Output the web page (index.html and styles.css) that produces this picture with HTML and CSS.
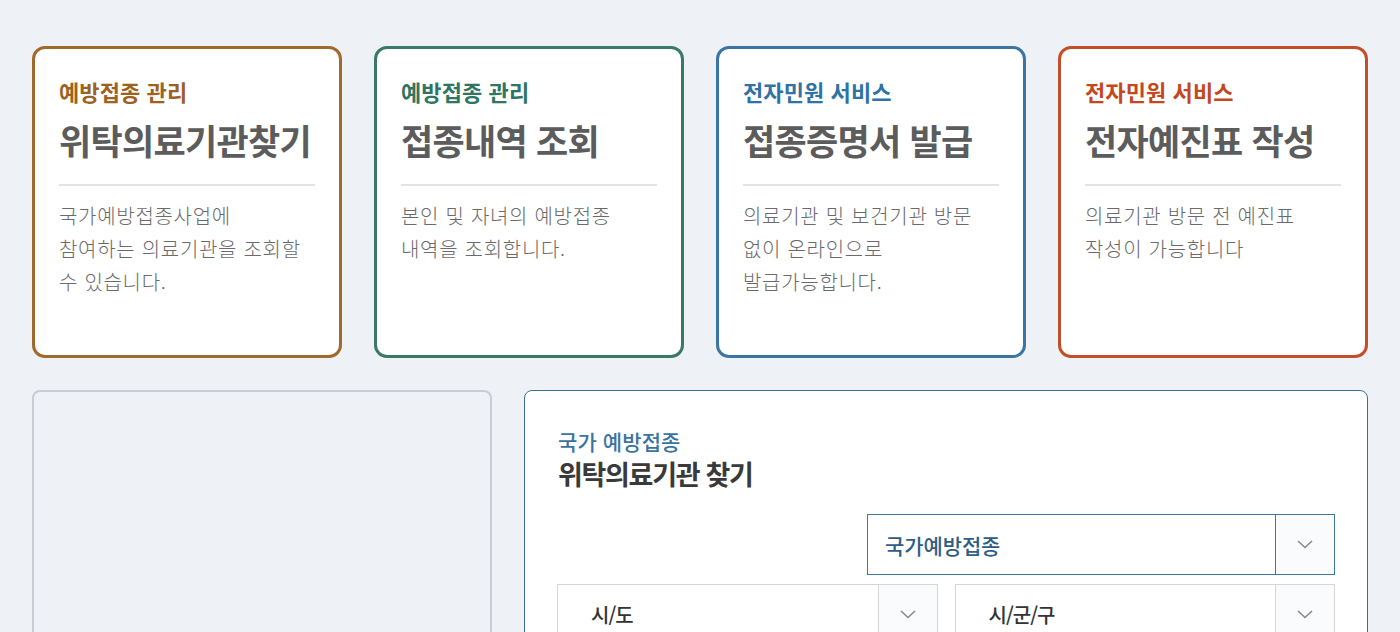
FILE: index.html
```html
<!DOCTYPE html>
<html lang="ko">
<head>
<meta charset="utf-8">
<title>예방접종</title>
<link rel="stylesheet" href="styles.css">
</head>
<body>
<div class="page">
  <div class="cards">
    <a class="card card-brown" href="#">
      <p class="eyebrow">예방접종 관리</p>
      <h2 class="title">위탁의료기관찾기</h2>
      <p class="desc">국가예방접종사업에<br>참여하는 의료기관을 조회할<br>수 있습니다.</p>
    </a>
    <a class="card card-green" href="#">
      <p class="eyebrow">예방접종 관리</p>
      <h2 class="title">접종내역 조회</h2>
      <p class="desc">본인 및 자녀의 예방접종<br>내역을 조회합니다.</p>
    </a>
    <a class="card card-blue" href="#">
      <p class="eyebrow">전자민원 서비스</p>
      <h2 class="title">접종증명서 발급</h2>
      <p class="desc">의료기관 및 보건기관 방문<br>없이 온라인으로<br>발급가능합니다.</p>
    </a>
    <a class="card card-red" href="#">
      <p class="eyebrow">전자민원 서비스</p>
      <h2 class="title">전자예진표 작성</h2>
      <p class="desc">의료기관 방문 전 예진표<br>작성이 가능합니다</p>
    </a>
  </div>
  <div class="bottom">
    <div class="panel-left"></div>
    <div class="panel-right">
      <p class="p-eyebrow">국가 예방접종</p>
      <h3 class="p-title">위탁의료기관 찾기</h3>
      <div class="row row-top">
        <div class="select select-main">
          <span class="select-text">국가예방접종</span>
          <span class="select-arrow"><svg width="16" height="9" viewBox="0 0 16 9"><path d="M1 1l7 6.5L15 1" fill="none" stroke="#8a8a8a" stroke-width="1.6"/></svg></span>
        </div>
      </div>
      <div class="row row-two">
        <div class="select select-sub">
          <span class="select-text sub-text">시/도</span>
          <span class="select-arrow"><svg width="16" height="9" viewBox="0 0 16 9"><path d="M1 1l7 6.5L15 1" fill="none" stroke="#8a8a8a" stroke-width="1.6"/></svg></span>
        </div>
        <div class="select select-sub">
          <span class="select-text sub-text">시/군/구</span>
          <span class="select-arrow"><svg width="16" height="9" viewBox="0 0 16 9"><path d="M1 1l7 6.5L15 1" fill="none" stroke="#8a8a8a" stroke-width="1.6"/></svg></span>
        </div>
      </div>
    </div>
  </div>
</div>
</body>
</html>
```

FILE: styles.css
```css
* { box-sizing: border-box; }
html, body { margin: 0; padding: 0; }
body {
  background: #eef2f6;
  font-family: "Noto Sans CJK KR", "Noto Sans", sans-serif;
  overflow: hidden;
  height: 632px;
}
.page {
  padding: 46px 32px 0;
}
.cards {
  display: flex;
  gap: 32px;
}
.card {
  display: block;
  width: 310px;
  height: 312px;
  background: #fff;
  border: 3px solid;
  border-radius: 13px;
  padding: 27px 24px 0 24px;
  text-decoration: none;
}
.card-brown { border-color: #a06a2c; }
.card-brown .eyebrow { color: #9b6222; }
.card-green { border-color: #3b7866; }
.card-green .eyebrow { color: #2f7561; }
.card-blue { border-color: #3b75a6; }
.card-blue .eyebrow { color: #2f72a6; }
.card-red { border-color: #c24e2a; }
.card-red .eyebrow { color: #c4471d; }

.eyebrow {
  margin: 0;
  font-size: 22px;
  line-height: 30px;
  font-weight: 700;
  letter-spacing: 0.1px;
}
.title {
  margin: 11px 0 0;
  font-size: 35px;
  line-height: 46px;
  font-weight: 700;
  color: #5c5c5c;
  letter-spacing: -0.7px;
  padding-bottom: 21px;
  border-bottom: 2px solid #e3e3e3;
}
.desc {
  margin: 13px 0 0;
  font-size: 20px;
  line-height: 33px;
  font-weight: 300;
  color: #6a6a6a;
  letter-spacing: 0.7px;
}

.bottom {
  display: flex;
  gap: 32px;
  margin-top: 32px;
}
.panel-left {
  width: 460px;
  height: 300px;
  border: 2px solid #c9cdd3;
  border-radius: 8px;
  background: #eef2f6;
}
.panel-right {
  width: 844px;
  height: 300px;
  background: #fff;
  border: 1px solid #3c6f98;
  border-radius: 8px;
  padding: 36px 32px 0 33px;
}
.p-eyebrow {
  margin: 0;
  font-size: 21px;
  line-height: 28px;
  font-weight: 500;
  color: #3a73a0;
  letter-spacing: 0.1px;
}
.p-title {
  margin: 1px 0 0;
  font-size: 27px;
  line-height: 36px;
  font-weight: 700;
  color: #3a3a3a;
  letter-spacing: -1.3px;
}
.row {
  display: flex;
}
.row-top {
  justify-content: flex-end;
  margin-top: 22px;
}
.row-two {
  margin-top: 9px;
  margin-left: -1px;
  gap: 17px;
}
.select {
  display: flex;
  align-items: stretch;
  height: 61px;
  background: #fff;
}
.select-main {
  width: 468px;
  border: 1px solid #3e77a0;
}
.select-main .select-arrow { border-left: 1px solid #3e77a0; }
.select-sub {
  width: 381px;
  border: 1px solid #d6d6d6;
}
.select-sub .select-arrow { border-left: 1px solid #d6d6d6; }
.select-text {
  flex: 1;
  display: flex;
  align-items: center;
  padding-left: 17px;
  font-size: 21px;
  font-weight: 500;
  color: #2f5e84;
  letter-spacing: -0.1px;
}
.sub-text {
  padding-left: 33px;
  font-size: 20px;
  color: #333;
  letter-spacing: -1px;
}
.select-arrow {
  width: 59px;
  display: flex;
  align-items: center;
  justify-content: center;
  background: #f9fbfc;
}
```
